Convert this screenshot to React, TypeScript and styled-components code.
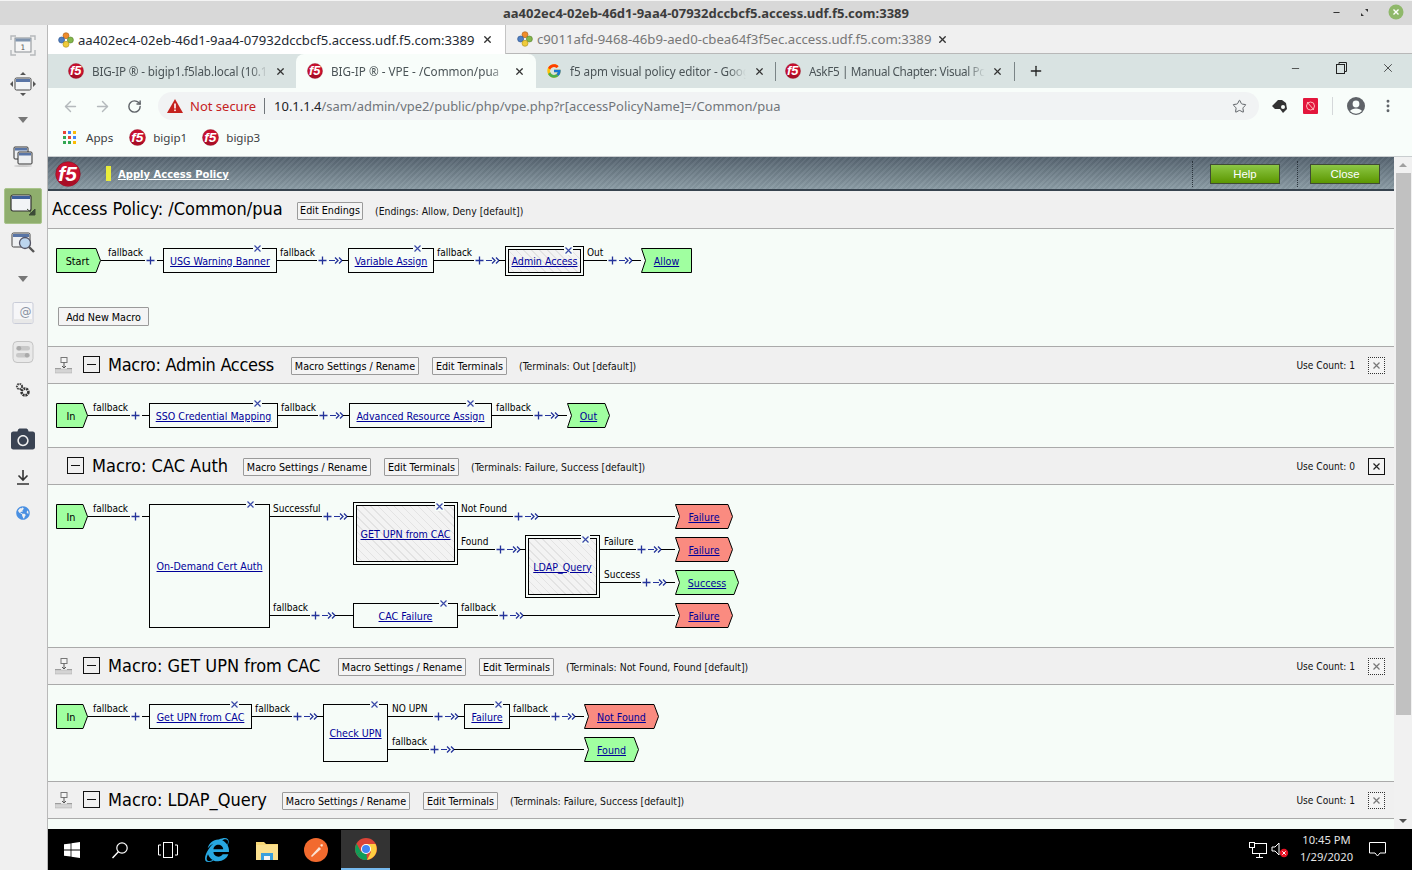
import React from "react";
import styled, { createGlobalStyle } from "styled-components";
import { FaInternetExplorer, FaGlobeAmericas, FaCamera } from "react-icons/fa";
import { FcGoogle } from "react-icons/fc";
import { ArrowLeft, ArrowRight, RotateCw, Star, X, Plus, Minus, MoreVertical } from "lucide-react";

const UI = `"Noto Sans", "DejaVu Sans", sans-serif`;
const TAHOMA = `"DejaVu Sans Condensed", "DejaVu Sans", sans-serif`;

const Global = createGlobalStyle`
  html, body { margin: 0; padding: 0; background: #f0f0f0; overflow: hidden; }
  * { box-sizing: border-box; }
`;

const Page = styled.div`
  width: 1412px; height: 870px; display: flex; flex-direction: column; overflow: hidden; font-family: ${UI};
`;
const TitleBar = styled.div`
  height: 25px; flex: none; background: #d8d8d8; border-top: 1px solid #f4f4f4; position: relative;
  display: flex; align-items: center; justify-content: center;
  font-size: 13px; font-weight: 700; color: #3c3c3c;
`;
const TitleControls = styled.div`
  position: absolute; right: 8px; top: 3px; display: flex; align-items: center; gap: 19px; color: #333;
`;
const Body = styled.div`display: flex; flex: 1; min-height: 0;`;
const Rail = styled.div`
  width: 48px; flex: none; background: #f0f0f0; border-right: 1px solid #b9b9b9;
  display: flex; flex-direction: column; align-items: center; padding: 3px 1px 0 0;
`;
const RailItem = styled.div<{ $h: number; $mt?: number; $active?: boolean }>`
  height: ${p => p.$h}px; width: 38px; margin-top: ${p => p.$mt ?? 0}px; flex: none;
  display: flex; align-items: center; justify-content: center;
  ${p => p.$active ? "background:#8fae6d;border:1px solid #a9c48c;border-radius:2px;" : ""}
`;
const Main = styled.div`flex: 1; min-width: 0; display: flex; flex-direction: column;`;

const GuacTabs = styled.div`height: 29px; flex: none; background: #f0f0f0; display: flex; border-bottom: 1px solid #b8b8b8;`;
const GuacTab = styled.div<{ $active?: boolean }>`
  display: flex; align-items: center; height: ${p => p.$active ? "29px" : "28px"}; flex: none;
  width: ${p => p.$active ? "458px" : "460px"}; padding-left: ${p => p.$active ? "10px" : "11px"};
  background: ${p => p.$active ? "#fff" : "transparent"};
  border-right: ${p => p.$active ? "1px solid #c4c4c4" : "0"};
  color: ${p => p.$active ? "#1f2a33" : "#777"}; font-size: ${p => p.$active ? "13.1px" : "13.2px"};
  svg { flex: none; }
`;
const GuacText = styled.span`margin-left: 4px; white-space: nowrap;`;
const TabClose = styled.span<{ $ml: number }>`margin-left: ${p => p.$ml}px; display: flex; color: #333;`;

const ChromeTabs = styled.div`height: 34px; flex: none; background: #d9e3e2; display: flex; position: relative; color: #4b5457;`;
const ChromeTab = styled.div<{ $active?: boolean; $w: number; $pl: number }>`
  width: ${p => p.$w}px; padding-left: ${p => p.$pl}px; display: flex; align-items: center; flex: none;
  font-size: 11.7px; position: relative;
  ${p => p.$active ? "background:#f8fdfa;border-radius:8px 8px 0 0;" : ""}
`;
const ChromeTabText = styled.span<{ $w: number; $ls?: number }>`
  width: ${p => p.$w}px; margin-left: 8px; white-space: nowrap; overflow: hidden; flex: none;
  letter-spacing: ${p => p.$ls ?? 0}px;
  -webkit-mask-image: linear-gradient(90deg, #000 90%, transparent);
`;
const TabDivider = styled.span`width: 1px; height: 19px; background: #7a8486; flex: none; align-self: center;`;
const NewTabIcon = styled.span`display: flex; color: #222;`;
const WinControls = styled.div`
  position: absolute; right: 0; top: 0; width: 140px; height: 28px; display: flex; align-items: center; justify-content: space-between;
  padding: 0 17px 0 18px; color: #222;
`;
const Toolbar = styled.div`height: 36px; flex: none; background: #f8fdfa; display: flex; align-items: center; padding-left: 6px; color: #9aa0a6;`;
const NavBtn = styled.span<{ $dark?: boolean; $w?: number }>`
  width: ${p => p.$w ?? 32}px; flex: none; display: flex; justify-content: center; color: ${p => p.$dark ? "#5f6368" : "#b4b9bc"};
`;
const Omnibox = styled.div`
  width: 1101px; margin-left: 8px; height: 28px; border-radius: 14px; background: #f1f3f4; display: flex; align-items: center; padding-left: 9px; flex: none;
`;
const NotSecure = styled.span`margin-left: 7px; color: #c5221f; font-size: 13px;`;
const OmniDivider = styled.span`width: 1px; height: 16px; background: #70757a; margin: 0 9px 0 8px;`;
const Url = styled.span`font-size: 12.95px; color: #70757a; white-space: nowrap;`;
const Host = styled.span`color: #202124;`;
const OmniStar = styled.span`margin-left: auto; margin-right: 12px; display: flex; color: #5f6368;`;
const ToolRight = styled.div`flex: 1; display: flex; align-items: center; color: #5f6368; padding-left: 12px;`;
const ToolDivider = styled.span`width: 1px; height: 18px; background: #d5d8da; margin: 0 13px 0 14px;`;
const ExtSlot = styled.span`margin-left: 14px; display: flex;`;
const MenuSlot = styled.span`margin-left: 14px; display: flex;`;
const Bookmarks = styled.div`
  height: 33px; flex: none; background: #f8fdfa; border-bottom: 1px solid #c9cdcf; display: flex; align-items: center; padding-left: 15px;
  font-size: 11.6px; color: #3c4043; padding-bottom: 5px;
`;
const Bookmark = styled.span<{ $ml: number; $gap?: number }>`display: flex; align-items: center; margin-left: ${p => p.$ml}px; gap: ${p => p.$gap ?? 7}px;`;

const Viewport = styled.div`flex: 1; min-height: 0; display: flex;`;
const Editor = styled.div`flex: 1; min-width: 0; overflow: hidden; background: #f0f0f0;`;
const Scrollbar = styled.div`width: 18px; flex: none; background: #f1f1f1; display: flex; flex-direction: column; align-items: center; color: #707070;`;
const ScrollArrow = styled.div<{ $up?: boolean }>`
  height: 16px; flex: none; display: flex; align-items: center; justify-content: center; width: 100%;
  &::before { content: ""; border-left: 4px solid transparent; border-right: 4px solid transparent;
  ${p => p.$up ? "border-bottom: 4px solid #a0a0a0;" : "border-top: 4px solid #505050;"} }
`;
const ScrollThumb = styled.div`width: 15px; height: 542px; background: #c1c1c1; flex: none;`;
const ScrollTrack = styled.div`flex: 1;`;

const AppHeader = styled.div`
  height: 34px; display: flex; align-items: center; position: relative; padding-left: 58px;
  border-bottom: 2px solid #37434e;
  background:
    repeating-linear-gradient(135deg, rgba(255,255,255,.045) 0 2px, rgba(0,0,0,.035) 2px 4px),
    linear-gradient(#55636f, #8b9ca5);
`;
const Logo = styled.span`position: absolute; left: 7px; top: 4px; display: flex;`;
const YellowBar = styled.span`width: 5px; height: 15px; background: #e9ec3a; margin-right: 7px;`;
const HeaderLink = styled.a`font: 700 10px "DejaVu Sans", sans-serif; color: #fff; text-decoration: underline; margin-top: 2px;`;
const HeaderActions = styled.div`margin-left: auto; display: flex; align-items: center; height: 100%;`;
const DotRule = styled.span`width: 0; height: 26px; border-left: 1px dotted #2b343c; margin-top: 1px;`;
const GreenBtn = styled.span<{ $ml: number; $mr: number }>`
  width: 70px; height: 20px; margin: 2px ${p => p.$mr}px 0 ${p => p.$ml}px; display: flex; align-items: center; justify-content: center;
  border: 1px solid #3f4a35; color: #fff; font: 400 11.4px "Liberation Sans", sans-serif;
  background: linear-gradient(#8cc745, #5c9700);
`;
const PolicyHeader = styled.div`
  height: 38px; display: flex; align-items: center; padding-left: 4px; border-bottom: 1px solid #aaa; font-family: ${TAHOMA};
`;
const SectionHeader = styled.div<{ $pl: number }>`
  height: 37px; display: flex; align-items: center; padding: 0 9px 0 ${p => p.$pl}px; border-bottom: 1px solid #aaa; font-family: ${TAHOMA};
`;
const PolicyTitle = styled.h2<{ $w: number; $ls?: number }>`
  width: ${p => p.$w}px; flex: none; letter-spacing: ${p => p.$ls ?? 0}px;
  margin: -2px 16px 0 0; font-size: 18px; font-weight: 400; color: #000; white-space: nowrap;
`;
const MacroBtn = styled.span<{ $w: number }>`
  width: ${p => p.$w}px; height: 18px; margin: 2px 13px 0 0; flex: none;
  border: 1px solid #9a9a9a; background: #f4f4f4; color: #000; font-size: 10.7px; display: flex; align-items: center; justify-content: center; white-space: nowrap; border-radius: 1px;
`;
const Note = styled.span`font-size: 10.35px; color: #111; white-space: nowrap; margin: 2px 0 0 -1px;`;
const UseCount = styled.span`margin-left: auto; font-size: 10.1px; color: #111;`;
const DelBox = styled.span<{ $on?: boolean }>`
  width: 17px; height: 17px; margin: 1px 0 0 13px; display: flex; align-items: center; justify-content: center;
  color: ${p => p.$on ? "#222" : "#777"}; background: #f4f4f4;
  border: 1px ${p => p.$on ? "solid #111" : "dotted #333"};
`;
const MinusBox = styled.span`
  width: 17px; height: 17px; margin: -1px 8px 0 0; flex: none; border: 1px solid #111; background: #f0f0f0; display: flex; align-items: center; justify-content: center;
  &::before { content: ""; width: 9px; height: 1px; background: #111; }
`;
const MoveIcon = styled.span`width: 17px; margin-right: 11px; display: flex; flex: none;`;

const Canvas = styled.div<{ $h: number }>`
  height: ${p => p.$h}px; position: relative; background: #f6fcf8; border-bottom: 1px solid #aaa; font-family: ${TAHOMA};
`;
const Wires = styled.svg`position: absolute; left: 0; top: 0; width: 100%; height: 100%; pointer-events: none;`;
const WireLabel = styled.span.attrs<{ $x: number; $y: number }>(p => ({ style: { left: p.$x, top: p.$y } }))`
  position: absolute; font-size: 10px; line-height: 12px; color: #000; white-space: nowrap;
`;
const NodeBox = styled.div.attrs<{ $x: number; $y: number; $w: number; $h: number }>(p => ({ style: { left: p.$x, top: p.$y, width: p.$w, height: p.$h } }))<{ $double?: boolean }>`
  position: absolute; display: flex; align-items: center; justify-content: center; background: #f6fcf8; border: 1px solid #000;
  ${p => p.$double ? "padding: 2px;" : ""}
`;
const NodeInner = styled.div`
  width: 100%; height: 100%; border: 1px solid #000; display: flex; align-items: center; justify-content: center;
  background: repeating-linear-gradient(45deg, #f3f3f3 0 3px, #e3e3e3 3px 4px, #f3f3f3 4px 5.6px);
`;
const NodeLink = styled.a`font-size: 10.6px; color: #000099; text-decoration: underline; white-space: nowrap; line-height: 12px;`;
const CloseMark = styled.span<{ $dx: number; $double?: boolean }>`
  position: absolute; left: ${p => p.$dx}px; top: ${p => p.$double ? "-1px" : "-5px"}; width: 9px; height: 9px; background: #f6fcf8; display: flex;
`;
const TerminalBox = styled.div.attrs<{ $x: number; $y: number; $w: number }>(p => ({ style: { left: p.$x, top: p.$y, width: p.$w } }))`
  position: absolute; height: 25px; display: flex; align-items: center; justify-content: center;
`;
const TerminalShape = styled.svg`position: absolute; inset: 0; width: 100%; height: 100%;`;
const TerminalText = styled.span`position: relative; font-size: 10.8px; color: #000; line-height: 12px; margin: 2px 2px 0 0;`;
const TerminalLink = styled.a`position: relative; font-size: 10.6px; color: #000099; text-decoration: underline; line-height: 12px;`;
const AddMacro = styled.span`
  position: absolute; left: 10px; top: 78px; width: 91px; height: 19px; border: 1px solid #9a9a9a; background: #f4f4f4;
  display: flex; align-items: center; justify-content: center; font-size: 10.7px; color: #000; border-radius: 1px; padding-top: 1px;
`;

const Taskbar = styled.div`height: 41px; flex: none; background: #000; display: flex; align-items: center; color: #fff;`;
const TaskIcon = styled.span<{ $w?: number; $active?: boolean }>`
  width: ${p => p.$w ?? 48}px; height: 40px; flex: none; display: flex; align-items: center; justify-content: center;
  ${p => p.$active ? "background:#333;border-bottom:2px solid #76b9ed;" : ""}
`;
const Tray = styled.div`margin-left: auto; display: flex; align-items: center; height: 100%;`;
const TrayIcon = styled.span<{ $w: number }>`width: ${p => p.$w}px; display: flex; justify-content: center;`;
const Clock = styled.div`width: 71px; text-align: center; font: 11.2px/17px "Noto Sans", sans-serif; color: #e4e4e4; margin-top: -3px;`;
const TrayEnd = styled.span`width: 20px;`;

/* ---------- drawings ---------- */
const F5 = ({ s = 16 }: { s?: number }) => (
  <svg width={s} height={s} viewBox="0 0 30 30">
    <circle cx="15" cy="15" r="14.2" fill="#c8102e" stroke="#7d0d1d" strokeWidth="0.6" />
    <ellipse cx="15" cy="24" rx="10" ry="4" fill="#8f0d20" opacity=".55" />
    <text x="14.5" y="23" textAnchor="middle" fontFamily="Liberation Sans, sans-serif" fontStyle="italic" fontWeight="700" fontSize="24" fill="#fff">f5</text>
  </svg>
);
const Guac = () => (
  <svg width="16" height="16" viewBox="0 0 16 16">
    <circle cx="8" cy="3.7" r="3" fill="#ef8c2b" stroke="#a85d14" strokeWidth=".6" />
    <circle cx="3.6" cy="8" r="3" fill="#4f7fc4" stroke="#2c4f85" strokeWidth=".6" />
    <circle cx="12.4" cy="8" r="3" fill="#84b84a" stroke="#557c2a" strokeWidth=".6" />
    <circle cx="8" cy="12.3" r="3" fill="#efcb3a" stroke="#a88b14" strokeWidth=".6" />
  </svg>
);
const Win = ({ w = 28, h = 24, children }: any) => (
  <svg width={w} height={h} viewBox={`0 0 ${w} ${h}`}>{children}</svg>
);
const IconDisplay = () => (
  <Win>
    <rect x="6" y="4" width="16" height="14" fill="#f6f6f6" stroke="#8a8f94" />
    <rect x="6.5" y="4.5" width="15" height="3" fill="#7f93ad" />
    <path d="M2 6V2h5M21 2h5v4M26 16v5h-5M7 21H2v-5" fill="none" stroke="#b5b8bb" strokeWidth="1.4" />
    <text x="14" y="16" textAnchor="middle" fontSize="7.5" fontFamily="DejaVu Sans" fill="#555">1</text>
  </Win>
);
const IconMove = () => (
  <Win>
    <rect x="6" y="6" width="16" height="12" rx="1.5" fill="#f2f4f6" stroke="#444" />
    <rect x="7" y="7" width="14" height="3" fill="#5975a6" />
    <path d="M14 0l3 3h-6zM14 24l3-3h-6zM1 12l3-3v6zM27 12l-3-3v6z" fill="#555" />
  </Win>
);
const Tri = () => <svg width="10" height="6" viewBox="0 0 10 6"><path d="M0 0h10L5 6z" fill="#777" /></svg>;
const IconWindows = () => (
  <Win>
    <ellipse cx="14" cy="23" rx="9" ry="1" fill="#ccc" />
    <rect x="5" y="4" width="14" height="12" rx="1" fill="#eef0f2" stroke="#333" />
    <rect x="6" y="5" width="12" height="2.5" fill="#5975a6" />
    <rect x="9" y="9" width="14" height="12" rx="1" fill="#eef0f2" stroke="#333" />
    <rect x="10" y="10" width="12" height="2.5" fill="#5975a6" />
  </Win>
);
const IconResize = () => (
  <Win w={32} h={26}>
    <rect x="4" y="2" width="20" height="16" rx="2" fill="#f2f4f6" stroke="#333" strokeWidth="1.2" />
    <rect x="5" y="3" width="18" height="3" fill="#3d5f9c" />
    <path d="M22 22l6-6v6zM20 16l6 5" fill="#3c4a36" stroke="#3c4a36" />
  </Win>
);
const IconZoom = () => (
  <Win w={26} h={26}>
    <rect x="2" y="3" width="18" height="14" rx="1.5" fill="#eef0f2" stroke="#444" />
    <rect x="3" y="4" width="16" height="3" fill="#5975a6" />
    <circle cx="15" cy="13" r="5.5" fill="#bcd5ee" stroke="#556" strokeWidth="1.3" />
    <path d="M19 17l5 5" stroke="#555" strokeWidth="2.4" />
  </Win>
);
const IconAt = () => (
  <Win w={24} h={24}>
    <rect x="2" y="1.5" width="20" height="21" rx="1.5" fill="#f6f6f8" stroke="#c9ccd8" />
    <rect x="2.5" y="18" width="19" height="4" fill="#e8e8e8" />
    <text x="14.5" y="14.5" textAnchor="middle" fontSize="12" fontFamily="DejaVu Sans" fill="#8a93a3">@</text>
  </Win>
);
const IconToggles = () => (
  <Win w={24} h={24}>
    <rect x="2" y="1.5" width="20" height="21" rx="4" fill="#e9e9e9" stroke="#c4c4c4" />
    <rect x="5" y="6" width="14" height="4.5" rx="2.2" fill="#c8c8c8" />
    <rect x="5" y="13" width="14" height="4.5" rx="2.2" fill="#c8c8c8" />
    <circle cx="8" cy="8.2" r="2.2" fill="#aaa" /><circle cx="16" cy="15.2" r="2.2" fill="#aaa" />
  </Win>
);
const IconGears = () => (
  <Win w={16} h={16}>
    <circle cx="4.5" cy="4.5" r="2.6" fill="none" stroke="#444" strokeWidth="2" strokeDasharray="1.6 .8" />
    <circle cx="10" cy="10" r="3.4" fill="none" stroke="#333" strokeWidth="2.6" strokeDasharray="2 .8" />
  </Win>
);
const IconDownload = () => (
  <Win w={14} h={16}>
    <path d="M7 1v10M2.5 6.5L7 11l4.5-4.5M1 15h12" fill="none" stroke="#333" strokeWidth="1.6" />
  </Win>
);
const Apps = () => (
  <svg width="13" height="13" viewBox="0 0 13 13">
    {["#ea4335", "#4285f4", "#fbbc05", "#34a853", "#ea4335", "#4285f4", "#34a853", "#34a853", "#fbbc05"].map((c, i) => (
      <rect key={i} x={(i % 3) * 5} y={Math.floor(i / 3) * 5} width="3" height="3" fill={c} />
    ))}
  </svg>
);
const Warning = () => (
  <svg width="16" height="14" viewBox="0 0 16 14"><path d="M8 0l8 14H0z" fill="#c5221f" /><rect x="7.2" y="4.5" width="1.6" height="5" fill="#fff" /><rect x="7.2" y="10.5" width="1.6" height="1.6" fill="#fff" /></svg>
);
const Restore = () => (
  <svg width="11" height="12" viewBox="0 0 11 12"><rect x=".5" y="2.5" width="8" height="9" fill="none" stroke="#222" /><path d="M3 2.5V.5h7.5v9H8.5" fill="none" stroke="#222" /></svg>
);
const Spy = () => (
  <svg width="18" height="16" viewBox="0 0 18 16"><path d="M1 8l6-6h4l4 3 1 6-4 4-3-4H4z" fill="#333" /><circle cx="12" cy="9" r="2" fill="#f8fdfa" /></svg>
);
const RedExt = () => (
  <svg width="15" height="16" viewBox="0 0 15 16"><rect width="15" height="16" rx="1" fill="#e3163c" /><circle cx="7.5" cy="8" r="4" fill="none" stroke="#fbb" /><path d="M4 4l7 8" stroke="#fbb" /></svg>
);
const Move = () => (
  <svg width="17" height="17" viewBox="0 0 17 17">
    <rect x="6" y=".5" width="6" height="5" fill="#f4f4f4" stroke="#777" />
    <path d="M9 5.5V11M7 9l2 2 2-2" fill="none" stroke="#555" />
    <path d="M0 11.5h6M12 11.5h5" stroke="#999" />
    <rect x="0" y="12" width="17" height="4" fill="#d4d4d4" stroke="#aaa" strokeWidth=".5" />
  </svg>
);
const XIcon = ({ c = "#3a4aa8" }: { c?: string }) => (
  <svg width="9" height="9" viewBox="0 0 9 9"><path d="M1.5 1.5l6 6M7.5 1.5l-6 6" stroke={c} strokeWidth="1.2" /></svg>
);
const WinLogo = () => (
  <svg width="16" height="16" viewBox="0 0 16 16"><path d="M0 2.3L6.6 1.4v6.2H0zM7.4 1.3L16 0v7.6H7.4zM0 8.4h6.6v6.2L0 13.7zM7.4 8.4H16V16l-8.6-1.3z" fill="#fff" /></svg>
);
const SearchTb = () => (
  <svg width="18" height="18" viewBox="0 0 18 18"><circle cx="11" cy="7" r="5.2" fill="none" stroke="#fff" strokeWidth="1.2" /><path d="M7.4 10.8L1.5 17" stroke="#fff" strokeWidth="1.4" /></svg>
);
const TaskView = () => (
  <svg width="20" height="16" viewBox="0 0 20 16"><rect x="5.5" y=".5" width="9" height="15" fill="none" stroke="#fff" /><path d="M3 3H.5v10H3M17 3h2.5v10H17" fill="none" stroke="#fff" /></svg>
);
const Folder = () => (
  <svg width="22" height="20" viewBox="0 0 22 20">
    <path d="M0 2h8l2 2h12v16H0z" fill="#f8d775" /><rect x="0" y="5" width="22" height="15" fill="#fbe08e" />
    <rect x="5" y="13" width="12" height="7" fill="#3aa0dd" /><rect x="8" y="16" width="6" height="4" fill="#f5f5f5" />
  </svg>
);
const Pen = () => (
  <svg width="24" height="24" viewBox="0 0 24 24">
    <circle cx="12" cy="12" r="12" fill="#f26a2e" /><path d="M7 18l8-9 2 2-9 8zM16 7l2-1 1 1-1 2z" fill="#fbe3d4" />
  </svg>
);
const Chrome = () => (
  <svg width="22" height="22" viewBox="0 0 22 22">
    <circle cx="11" cy="11" r="11" fill="#db4437" />
    <path d="M11 11L1.6 16.5A11 11 0 0 0 11 22a11 11 0 0 0 1-.05z" fill="#0f9d58" />
    <path d="M11 6h9.5A11 11 0 0 1 12 21.95L16 14z" fill="#ffcd40" />
    <path d="M11 11L1.6 16.5A11 11 0 0 1 1.6 5.5L6 14z" fill="#0f9d58" />
    <circle cx="11" cy="11" r="5" fill="#fff" /><circle cx="11" cy="11" r="4" fill="#4285f4" />
  </svg>
);
const Network = () => (
  <svg width="18" height="16" viewBox="0 0 18 16"><rect x="3.5" y="1.5" width="14" height="10" fill="none" stroke="#fff" /><rect x=".5" y=".5" width="5" height="5" fill="#000" stroke="#fff" /><path d="M10.5 12v3M7 15.5h7" stroke="#fff" /></svg>
);
const Volume = () => (
  <svg width="18" height="16" viewBox="0 0 18 16"><path d="M1 5h3l4-4v12L4 9H1z" fill="none" stroke="#fff" /><circle cx="13" cy="11" r="4.2" fill="#e81123" /><path d="M11.3 9.3l3.4 3.4M14.7 9.3l-3.4 3.4" stroke="#fff" /></svg>
);
const Notify = () => (
  <svg width="17" height="15" viewBox="0 0 17 15"><path d="M.5.5h16v10.5h-5.5L8.5 14 6 11H.5z" fill="none" stroke="#fff" /></svg>
);

/* ---------- diagram ---------- */
type Link = { x1: number; x2: number; y: number; plus: number; arrow?: boolean; label: string; lx: number };
type Node = { x: number; y: number; w: number; h: number; text: string; mark: number; double?: boolean };
type Term = { x: number; y: number; w: number; text: string; kind: "start" | "end"; color: "red" | "green"; plain?: boolean; flatRight?: boolean };

const NAVY = "#24339a";
const WireSvg = ({ links, ox, oy }: { links: Link[]; ox: number; oy: number }) => (
  <Wires>
    {links.map((l, i) => {
      const y = l.y - oy + 0.5;
      const p = l.plus - ox;
      const a = p + 13;
      return (
        <g key={i}>
          <path d={`M${l.x1 - ox} ${y}H${p - 5}`} stroke="#000" />
          <path d={`M${p - 3.5} ${y}h8M${p + 0.5} ${y - 4}v8`} stroke={NAVY} strokeWidth="1.3" />
          {l.arrow ? (
            <>
              <path d={`M${p + 7} ${y}H${a}`} stroke={NAVY} />
              <path d={`M${a} ${y - 3}l3 3-3 3M${a + 4} ${y - 3}l3 3-3 3`} fill="none" stroke={NAVY} strokeWidth="1.3" />
              <path d={`M${a + 7} ${y}H${l.x2 - ox}`} stroke="#000" />
            </>
          ) : (
            <path d={`M${p + 7} ${y}H${l.x2 - ox}`} stroke="#000" />
          )}
        </g>
      );
    })}
  </Wires>
);

const Terminal = ({ t, ox, oy }: { t: Term; ox: number; oy: number }) => {
  const w = t.w - 1, h = 24;
  const fill = t.color === "red" ? "#fa8b80" : "#a0ffa0";
  const notch = t.kind === "start" ? "" : ` 4.5,12.5`;
  const right = t.flatRight ? `${w + 0.5},0.5 ${w + 0.5},${h + 0.5}` : `${w - 4},0.5 ${w + 0.5},12.5 ${w - 4},${h + 0.5}`;
  return (
    <TerminalBox $x={t.x - ox} $y={t.y - oy} $w={t.w}>
      <TerminalShape>
        <polygon points={`0.5,0.5 ${right} 0.5,${h + 0.5}${notch}`} fill={fill} stroke="#000" />
      </TerminalShape>
      {t.plain ? <TerminalText>{t.text}</TerminalText> : <TerminalLink>{t.text}</TerminalLink>}
    </TerminalBox>
  );
};

const Diagram = ({ h, oy, links, nodes, terms, children }: { h: number; oy: number; links: Link[]; nodes: Node[]; terms: Term[]; children?: React.ReactNode }) => {
  const ox = 48;
  return (
    <Canvas $h={h}>
      <WireSvg links={links} ox={ox} oy={oy} />
      {links.map((l, i) => <WireLabel key={i} $x={l.lx - ox} $y={l.y - oy - 13}>{l.label}</WireLabel>)}
      {terms.map((t, i) => <Terminal key={i} t={t} ox={ox} oy={oy} />)}
      {nodes.map((n, i) => (
        <NodeBox key={i} $x={n.x - ox} $y={n.y - oy} $w={n.w} $h={n.h} $double={n.double}>
          {n.double ? <NodeInner><NodeLink>{n.text}</NodeLink></NodeInner> : <NodeLink>{n.text}</NodeLink>}
          <CloseMark $dx={n.mark - n.x - 5} $double={n.double}><XIcon /></CloseMark>
        </NodeBox>
      ))}
      {children}
    </Canvas>
  );
};

const Header = ({ title, note, count, move, on, pl, tw, ls }: any) => (
  <SectionHeader $pl={pl}>
    {move && <MoveIcon><Move /></MoveIcon>}
    <MinusBox />
    <PolicyTitle $w={tw} $ls={ls}>{title}</PolicyTitle>
    <MacroBtn $w={128}>Macro Settings / Rename</MacroBtn>
    <MacroBtn $w={75}>Edit Terminals</MacroBtn>
    <Note>{note}</Note>
    <UseCount>Use Count: {count}</UseCount>
    <DelBox $on={on}><XIcon c={on ? "#222" : "#777"} /></DelBox>
  </SectionHeader>
);

const policyLinks: Link[] = [
  { x1: 101, x2: 163, y: 260, plus: 150, label: "fallback", lx: 108 },
  { x1: 277, x2: 348, y: 260, plus: 322, arrow: true, label: "fallback", lx: 280 },
  { x1: 434, x2: 505, y: 260, plus: 479, arrow: true, label: "fallback", lx: 437 },
  { x1: 584, x2: 641, y: 260, plus: 612, arrow: true, label: "Out", lx: 587 },
];
const policyNodes: Node[] = [
  { x: 163, y: 248, w: 114, h: 25, text: "USG Warning Banner", mark: 257 },
  { x: 348, y: 248, w: 86, h: 25, text: "Variable Assign", mark: 417 },
  { x: 505, y: 246, w: 79, h: 30, text: "Admin Access", mark: 568, double: true },
];
const policyTerms: Term[] = [
  { x: 56, y: 248, w: 45, text: "Start", kind: "start", color: "green", plain: true },
  { x: 641, y: 248, w: 51, text: "Allow", kind: "end", color: "green", flatRight: true },
];

const adminLinks: Link[] = [
  { x1: 87, x2: 149, y: 415, plus: 135, label: "fallback", lx: 93 },
  { x1: 278, x2: 349, y: 415, plus: 323, arrow: true, label: "fallback", lx: 281 },
  { x1: 492, x2: 567, y: 415, plus: 538, arrow: true, label: "fallback", lx: 496 },
];
const adminNodes: Node[] = [
  { x: 149, y: 403, w: 129, h: 25, text: "SSO Credential Mapping", mark: 257 },
  { x: 349, y: 403, w: 143, h: 25, text: "Advanced Resource Assign", mark: 470 },
];
const adminTerms: Term[] = [
  { x: 56, y: 403, w: 32, text: "In", kind: "start", color: "green", plain: true },
  { x: 567, y: 403, w: 43, text: "Out", kind: "end", color: "green" },
];

const cacLinks: Link[] = [
  { x1: 87, x2: 149, y: 516, plus: 135, label: "fallback", lx: 93 },
  { x1: 270, x2: 353, y: 516, plus: 327, arrow: true, label: "Successful", lx: 273 },
  { x1: 458, x2: 675, y: 516, plus: 518, arrow: true, label: "Not Found", lx: 461 },
  { x1: 458, x2: 525, y: 549, plus: 500, arrow: true, label: "Found", lx: 461 },
  { x1: 600, x2: 675, y: 549, plus: 641, arrow: true, label: "Failure", lx: 604 },
  { x1: 600, x2: 675, y: 582, plus: 646, arrow: true, label: "Success", lx: 604 },
  { x1: 270, x2: 353, y: 615, plus: 315, arrow: true, label: "fallback", lx: 273 },
  { x1: 458, x2: 675, y: 615, plus: 503, arrow: true, label: "fallback", lx: 461 },
];
const cacNodes: Node[] = [
  { x: 149, y: 504, w: 121, h: 124, text: "On-Demand Cert Auth", mark: 250 },
  { x: 353, y: 502, w: 105, h: 63, text: "GET UPN from CAC", mark: 439, double: true },
  { x: 525, y: 535, w: 75, h: 63, text: "LDAP_Query", mark: 585, double: true },
  { x: 353, y: 603, w: 105, h: 25, text: "CAC Failure", mark: 443 },
];
const cacTerms: Term[] = [
  { x: 56, y: 504, w: 32, text: "In", kind: "start", color: "green", plain: true },
  { x: 675, y: 504, w: 58, text: "Failure", kind: "end", color: "red" },
  { x: 675, y: 537, w: 58, text: "Failure", kind: "end", color: "red" },
  { x: 675, y: 570, w: 64, text: "Success", kind: "end", color: "green" },
  { x: 675, y: 603, w: 58, text: "Failure", kind: "end", color: "red" },
];

const upnLinks: Link[] = [
  { x1: 87, x2: 149, y: 716, plus: 135, label: "fallback", lx: 93 },
  { x1: 252, x2: 323, y: 716, plus: 297, arrow: true, label: "fallback", lx: 255 },
  { x1: 388, x2: 464, y: 716, plus: 438, arrow: true, label: "NO UPN", lx: 392 },
  { x1: 510, x2: 584, y: 716, plus: 555, arrow: true, label: "fallback", lx: 513 },
  { x1: 388, x2: 584, y: 749, plus: 434, arrow: true, label: "fallback", lx: 392 },
];
const upnNodes: Node[] = [
  { x: 149, y: 704, w: 103, h: 25, text: "Get UPN from CAC", mark: 234 },
  { x: 323, y: 704, w: 65, h: 58, text: "Check UPN", mark: 374 },
  { x: 464, y: 704, w: 46, h: 25, text: "Failure", mark: 498 },
];
const upnTerms: Term[] = [
  { x: 56, y: 704, w: 32, text: "In", kind: "start", color: "green", plain: true },
  { x: 584, y: 704, w: 75, text: "Not Found", kind: "end", color: "red" },
  { x: 584, y: 737, w: 55, text: "Found", kind: "end", color: "green" },
];

export default function App() {
  return (
    <Page>
      <Global />
      <TitleBar>
        aa402ec4-02eb-46d1-9aa4-07932dccbcf5.access.udf.f5.com:3389
        <TitleControls>
          <Minus size={9} strokeWidth={3} />
          <svg width="9" height="9" viewBox="0 0 9 9"><path d="M5 1l3 0 0 3zM4 8l-3 0 0-3z" fill="#333" /></svg>
          <svg width="16" height="16" viewBox="0 0 16 16"><circle cx="8" cy="8" r="7.5" fill="#8fb86a" /><path d="M5.5 5.5l5 5M10.5 5.5l-5 5" stroke="#fff" strokeWidth="1.4" /></svg>
        </TitleControls>
      </TitleBar>
      <Body>
        <Rail>
          <RailItem $h={36}><IconDisplay /></RailItem>
          <RailItem $h={40}><IconMove /></RailItem>
          <RailItem $h={32}><Tri /></RailItem>
          <RailItem $h={38}><IconWindows /></RailItem>
          <RailItem $h={36} $mt={14} $active><IconResize /></RailItem>
          <RailItem $h={38}><IconZoom /></RailItem>
          <RailItem $h={34}><Tri /></RailItem>
          <RailItem $h={34}><IconAt /></RailItem>
          <RailItem $h={44}><IconToggles /></RailItem>
          <RailItem $h={32}><IconGears /></RailItem>
          <RailItem $h={34} $mt={16}><FaCamera size={24} color="#3a4353" /></RailItem>
          <RailItem $h={42}><IconDownload /></RailItem>
          <RailItem $h={30}><FaGlobeAmericas size={14} color="#4a90e2" /></RailItem>
        </Rail>
        <Main>
          <GuacTabs>
            <GuacTab $active>
              <Guac />
              <GuacText>aa402ec4-02eb-46d1-9aa4-07932dccbcf5.access.udf.f5.com:3389</GuacText>
              <TabClose $ml={8}><X size={11} strokeWidth={3} /></TabClose>
            </GuacTab>
            <GuacTab>
              <Guac />
              <GuacText>c9011afd-9468-46b9-aed0-cbea64f3f5ec.access.udf.f5.com:3389</GuacText>
              <TabClose $ml={6}><X size={11} strokeWidth={3} /></TabClose>
            </GuacTab>
          </GuacTabs>
          <ChromeTabs>
            <ChromeTab $w={248} $pl={20}>
              <F5 /><ChromeTabText $w={176} $ls={-0.15}>BIG-IP ® - bigip1.f5lab.local (10.1.</ChromeTabText>
              <TabClose $ml={7}><X size={11} strokeWidth={2.6} /></TabClose>
            </ChromeTab>
            <ChromeTab $active $w={240} $pl={11}>
              <F5 /><ChromeTabText $w={176}>BIG-IP ® - VPE - /Common/pua</ChromeTabText>
              <TabClose $ml={7}><X size={11} strokeWidth={2.6} /></TabClose>
            </ChromeTab>
            <ChromeTab $w={239} $pl={10}>
              <FcGoogle size={16} /><ChromeTabText $w={176} $ls={-0.1}>f5 apm visual policy editor - Goog</ChromeTabText>
              <TabClose $ml={8}><X size={11} strokeWidth={2.6} /></TabClose>
            </ChromeTab>
            <TabDivider />
            <ChromeTab $w={238} $pl={9}>
              <F5 /><ChromeTabText $w={176} $ls={-0.35}>AskF5 | Manual Chapter: Visual Pc</ChromeTabText>
              <TabClose $ml={7}><X size={11} strokeWidth={2.6} /></TabClose>
            </ChromeTab>
            <TabDivider />
            <ChromeTab $w={40} $pl={13}><NewTabIcon><Plus size={16} strokeWidth={2} /></NewTabIcon></ChromeTab>
            <WinControls>
              <Minus size={11} strokeWidth={1.6} />
              <Restore />
              <X size={14} strokeWidth={1.3} />
            </WinControls>
          </ChromeTabs>
          <Toolbar>
            <NavBtn><ArrowLeft size={17} strokeWidth={2} /></NavBtn>
            <NavBtn><ArrowRight size={17} strokeWidth={2} /></NavBtn>
            <NavBtn $dark><RotateCw size={15} strokeWidth={2.3} /></NavBtn>
            <Omnibox>
              <Warning />
              <NotSecure>Not secure</NotSecure>
              <OmniDivider />
              <Url><Host>10.1.1.4</Host>/sam/admin/vpe2/public/php/vpe.php?r[accessPolicyName]=/Common/pua</Url>
              <OmniStar><Star size={15} strokeWidth={1.6} /></OmniStar>
            </Omnibox>
            <ToolRight>
              <Spy />
              <ExtSlot><RedExt /></ExtSlot>
              <ToolDivider />
              <svg width="20" height="20" viewBox="0 0 20 20"><circle cx="10" cy="10" r="9" fill="#5f6368" /><circle cx="10" cy="8" r="3.4" fill="#f8fdfa" /><path d="M4 15c2-3.4 10-3.4 12 0a8 8 0 0 1-12 0z" fill="#f8fdfa" /></svg>
              <MenuSlot><MoreVertical size={16} strokeWidth={2.4} /></MenuSlot>
            </ToolRight>
          </Toolbar>
          <Bookmarks>
            <Bookmark $ml={0} $gap={10}><Apps />Apps</Bookmark>
            <Bookmark $ml={16}><F5 s={17} />bigip1</Bookmark>
            <Bookmark $ml={15}><F5 s={17} />bigip3</Bookmark>
          </Bookmarks>
          <Viewport>
            <Editor>
              <AppHeader>
                <Logo><F5 s={26} /></Logo>
                <YellowBar />
                <HeaderLink>Apply Access Policy</HeaderLink>
                <HeaderActions>
                  <DotRule />
                  <GreenBtn $ml={17} $mr={17}>Help</GreenBtn>
                  <DotRule />
                  <GreenBtn $ml={12} $mr={14}>Close</GreenBtn>
                </HeaderActions>
              </AppHeader>
              <PolicyHeader>
                <PolicyTitle $w={229}>Access Policy: /Common/pua</PolicyTitle>
                <MacroBtn $w={66}>Edit Endings</MacroBtn>
                <Note>(Endings: Allow, Deny [default])</Note>
              </PolicyHeader>
              <Diagram h={118} oy={229} links={policyLinks} nodes={policyNodes} terms={policyTerms}>
                <AddMacro>Add New Macro</AddMacro>
              </Diagram>
              <Header pl={7} move tw={167} ls={-0.3} title="Macro: Admin Access" note="(Terminals: Out [default])" count={1} />
              <Diagram h={64} oy={384} links={adminLinks} nodes={adminNodes} terms={adminTerms} />
              <Header pl={19} on tw={135} title="Macro: CAC Auth" note="(Terminals: Failure, Success [default])" count={0} />
              <Diagram h={163} oy={485} links={cacLinks} nodes={cacNodes} terms={cacTerms} />
              <Header pl={7} move tw={214} title="Macro: GET UPN from CAC" note="(Terminals: Not Found, Found [default])" count={1} />
              <Diagram h={97} oy={685} links={upnLinks} nodes={upnNodes} terms={upnTerms} />
              <Header pl={7} move tw={158} title="Macro: LDAP_Query" note="(Terminals: Failure, Success [default])" count={1} />
              <Canvas $h={20} />
            </Editor>
            <Scrollbar>
              <ScrollArrow $up />
              <ScrollThumb />
              <ScrollTrack />
              <ScrollArrow />
            </Scrollbar>
          </Viewport>
          <Taskbar>
            <TaskIcon><WinLogo /></TaskIcon>
            <TaskIcon><SearchTb /></TaskIcon>
            <TaskIcon><TaskView /></TaskIcon>
            <TaskIcon $w={50}><FaInternetExplorer size={24} color="#27a7e0" /></TaskIcon>
            <TaskIcon $w={49}><Folder /></TaskIcon>
            <TaskIcon $w={50}><Pen /></TaskIcon>
            <TaskIcon $w={49} $active><Chrome /></TaskIcon>
            <Tray>
              <TrayIcon $w={22}><Network /></TrayIcon>
              <TrayIcon $w={22}><Volume /></TrayIcon>
              <Clock>10:45 PM<br />1/29/2020</Clock>
              <TrayIcon $w={30}><Notify /></TrayIcon>
              <TrayEnd />
            </Tray>
          </Taskbar>
        </Main>
      </Body>
    </Page>
  );
}
